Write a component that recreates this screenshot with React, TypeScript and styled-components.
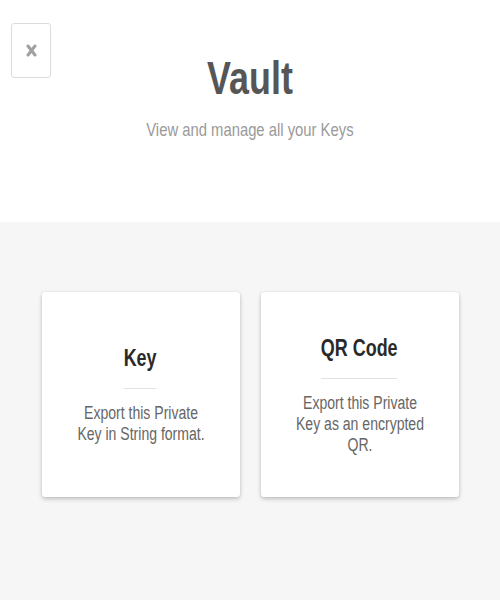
import styled, { createGlobalStyle } from 'styled-components';

const GlobalStyle = createGlobalStyle`
  html, body {
    margin: 0;
    padding: 0;
    background: #f6f6f6;
    font-family: "Liberation Sans", Arial, Helvetica, sans-serif;
  }
`;

// the reference text is set in a narrow grotesque; squeeze Liberation Sans to match
const NARROW = 0.78;

const cards = [
  { title: 'Key', text: 'Export this Private Key in String format.' },
  { title: 'QR Code', text: 'Export this Private Key as an encrypted QR.' },
];

function App() {
  return (
    <>
      <GlobalStyle />
      <Page>
        <Header>
          <CloseButton aria-label="close">
            <svg width="11" height="13" viewBox="0 0 11 13" preserveAspectRatio="none">
              <path
                d="M2 2 L9 11 M9 2 L2 11"
                stroke="#a0a0a0"
                strokeWidth="3"
                strokeLinecap="round"
              />
            </svg>
          </CloseButton>
          <Title>Vault</Title>
          <Subtitle>View and manage all your Keys</Subtitle>
        </Header>

        <CardList>
          {cards.map((card) => (
            <Card key={card.title}>
              <CardTitle>{card.title}</CardTitle>
              <CardText>{card.text}</CardText>
            </Card>
          ))}
        </CardList>
      </Page>
    </>
  );
}

const Page = styled.div`
  min-height: 600px;
  display: flex;
  flex-direction: column;
`;

const Header = styled.header`
  position: relative;
  height: 222px;
  background: #ffffff;
  display: flex;
  flex-direction: column;
  align-items: center;
  padding-top: 51px;
  box-sizing: border-box;
`;

const CloseButton = styled.button`
  position: absolute;
  top: 23px;
  left: 11px;
  width: 40px;
  height: 55px;
  padding: 0;
  border: 1px solid #dcdcdc;
  border-radius: 3px;
  background: #ffffff;
  display: flex;
  align-items: center;
  justify-content: center;
  cursor: pointer;
`;

const Title = styled.h1`
  margin: 0;
  font-size: 46px;
  font-weight: 700;
  line-height: 54px;
  color: #565656;
  transform: scaleX(${NARROW});
`;

const Subtitle = styled.p`
  margin: 12px 0 0;
  font-size: 19px;
  line-height: 25px;
  color: #9a9a9a;
  transform: scaleX(${NARROW});
`;

const CardList = styled.div`
  display: flex;
  justify-content: center;
  gap: 21px;
  padding-top: 70px;
`;

const Card = styled.div`
  width: 198px;
  height: 205px;
  box-sizing: border-box;
  background: #ffffff;
  border-radius: 3px;
  box-shadow: 0 2px 4px rgba(0, 0, 0, 0.22), 0 0 2px rgba(0, 0, 0, 0.08);
  display: flex;
  flex-direction: column;
  align-items: center;
  justify-content: center;
  text-align: center;
`;

const CardTitle = styled.h2`
  margin: 0 0 14px;
  padding-bottom: 16px;
  border-bottom: 1px solid #e2e2e2;
  font-size: 23px;
  font-weight: 700;
  line-height: 28px;
  color: #2a2a2a;
  transform: scaleX(${NARROW});
`;

const CardText = styled.p`
  width: 172px;
  margin: 0;
  font-size: 18px;
  line-height: 21px;
  color: #666666;
  transform: scaleX(${NARROW});
`;

export default App;
